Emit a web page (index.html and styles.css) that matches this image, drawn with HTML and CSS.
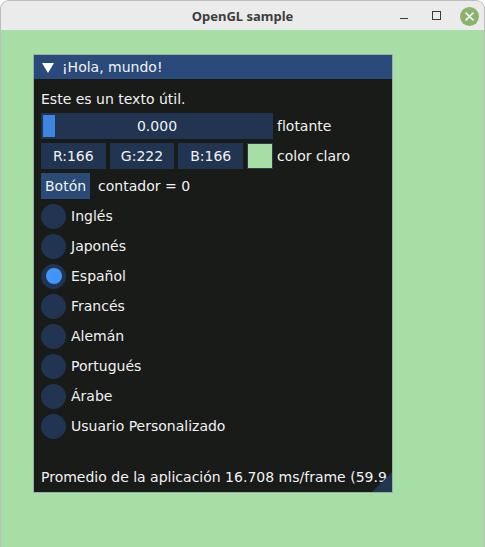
FILE: index.html
```html
<!DOCTYPE html>
<html lang="es">
<head>
<meta charset="utf-8">
<title>OpenGL sample</title>
<link rel="stylesheet" href="styles.css">
</head>
<body>
<div class="app">
  <header class="titlebar">
    <span></span>
    <span class="title">OpenGL sample</span>
    <div class="controls">
      <span class="btn-min"></span>
      <span class="btn-max"></span>
      <span class="btn-close">
        <svg width="19" height="19" viewBox="0 0 19 19"><path d="M6 6 L13 13 M13 6 L6 13" stroke="#fff" stroke-width="1.6" stroke-linecap="round" fill="none"/></svg>
      </span>
    </div>
  </header>
  <main class="canvas">
    <section class="imwin">
      <div class="imtitle">
        <svg class="arrow" width="12" height="10" viewBox="0 0 12 10"><polygon points="0,0 12,0 6,10" fill="#fff"/></svg>
        <span>¡Hola, mundo!</span>
      </div>
      <div class="imbody">
        <div class="text">Este es un texto útil.</div>
        <div class="row">
          <div class="slider"><div class="grab"></div><span>0.000</span></div>
          <span class="label">flotante</span>
        </div>
        <div class="row">
          <div class="coloredit">
            <div class="comp">R:166</div>
            <div class="comp">G:222</div>
            <div class="comp">B:166</div>
            <div class="swatch"></div>
          </div>
          <span class="label">color claro</span>
        </div>
        <div class="row wide">
          <div class="button">Botón</div>
          <span class="label">contador = 0</span>
        </div>
        <div class="row radio"><span class="circle"></span><span class="label">Inglés</span></div>
        <div class="row radio"><span class="circle"></span><span class="label">Japonés</span></div>
        <div class="row radio"><span class="circle on"></span><span class="label">Español</span></div>
        <div class="row radio"><span class="circle"></span><span class="label">Francés</span></div>
        <div class="row radio"><span class="circle"></span><span class="label">Alemán</span></div>
        <div class="row radio"><span class="circle"></span><span class="label">Portugués</span></div>
        <div class="row radio"><span class="circle"></span><span class="label">Árabe</span></div>
        <div class="row radio"><span class="circle"></span><span class="label">Usuario Personalizado</span></div>
        <div class="footer">Promedio de la aplicación 16.708 ms/frame (59.9</div>
      </div>
      <div class="grip"></div>
    </section>
  </main>
</div>
</body>
</html>
```

FILE: styles.css
```css
html, body {
  margin: 0;
  padding: 0;
  background: #ffffff;
}

.app {
  width: 485px;
  height: 547px;
  box-sizing: border-box;
  border: 1px solid #bdbdbd;
  border-bottom: none;
  border-radius: 9px 9px 0 0;
  overflow: hidden;
  display: flex;
  flex-direction: column;
  background: #a6dea6;
}

.titlebar {
  flex: none;
  height: 29px;
  background: #ebebeb;
  display: grid;
  grid-template-columns: 1fr auto 1fr;
  align-items: center;
}

.title {
  font-family: "Noto Sans", "Open Sans", sans-serif;
  font-weight: bold;
  font-size: 13px;
  color: #3d3d3d;
  padding-top: 1px;
}

.controls {
  justify-self: end;
  display: flex;
  align-items: center;
  padding-right: 5px;
}

.btn-min {
  width: 8px;
  height: 1px;
  background: #3a3a3a;
  margin-top: 6px;
}

.btn-max {
  width: 7px;
  height: 7px;
  border: 1px solid #3a3a3a;
  margin-left: 24px;
  margin-top: -1px;
}

.btn-close {
  width: 19px;
  height: 19px;
  border-radius: 50%;
  background: #8ab36b;
  margin-left: 19px;
  margin-top: 1px;
  display: flex;
}

.canvas {
  flex: 1;
  position: relative;
}

.imwin {
  position: absolute;
  left: 32px;
  top: 24px;
  width: 360px;
  height: 439px;
  box-sizing: border-box;
  border: 1px solid #9bb0a3;
  background: #181b18;
  font-family: "DejaVu Sans", sans-serif;
  font-size: 14px;
  color: #f2f2f2;
  overflow: hidden;
}

.imtitle {
  height: 24px;
  background: #294a7a;
  display: flex;
  align-items: center;
  padding-left: 8px;
  gap: 8px;
  white-space: nowrap;
}

.arrow {
  margin-top: 1px;
}

.imbody {
  padding: 10px 7px 0 7px;
}

.text {
  height: 20px;
  line-height: 20px;
  margin-bottom: 4px;
  white-space: nowrap;
}

.row {
  display: flex;
  align-items: center;
  height: 26px;
  margin-bottom: 4px;
  gap: 4px;
  white-space: nowrap;
}

.row.wide {
  gap: 8px;
}

.label {
  line-height: 26px;
}

.slider {
  position: relative;
  width: 232px;
  height: 26px;
  background: #213451;
  display: flex;
  align-items: center;
  justify-content: center;
  line-height: 26px;
}

.grab {
  position: absolute;
  left: 2px;
  top: 2px;
  width: 12px;
  height: 22px;
  background: #3d85e0;
}

.coloredit {
  width: 232px;
  display: flex;
  gap: 4px;
}

.comp {
  flex: 1;
  height: 26px;
  line-height: 26px;
  text-align: center;
  background: #213451;
}

.swatch {
  flex: none;
  width: 24px;
  height: 24px;
  border: 1px solid #2b3b4e;
  background: #a6dea6;
}

.button {
  height: 26px;
  line-height: 26px;
  padding: 0 4px;
  background: #294b75;
}

.radio {
  gap: 5px;
}

.circle {
  flex: none;
  width: 25px;
  height: 25px;
  border-radius: 50%;
  background: #213451;
  display: flex;
  align-items: center;
  justify-content: center;
}

.circle.on::after {
  content: "";
  width: 16px;
  height: 16px;
  border-radius: 50%;
  background: #4296fa;
}

.footer {
  margin-top: 28px;
  height: 20px;
  line-height: 20px;
  white-space: nowrap;
}

.grip {
  position: absolute;
  right: 0;
  bottom: 0;
  width: 20px;
  height: 20px;
  background: #21364f;
  clip-path: polygon(100% 0, 100% 100%, 0 100%);
}
```
